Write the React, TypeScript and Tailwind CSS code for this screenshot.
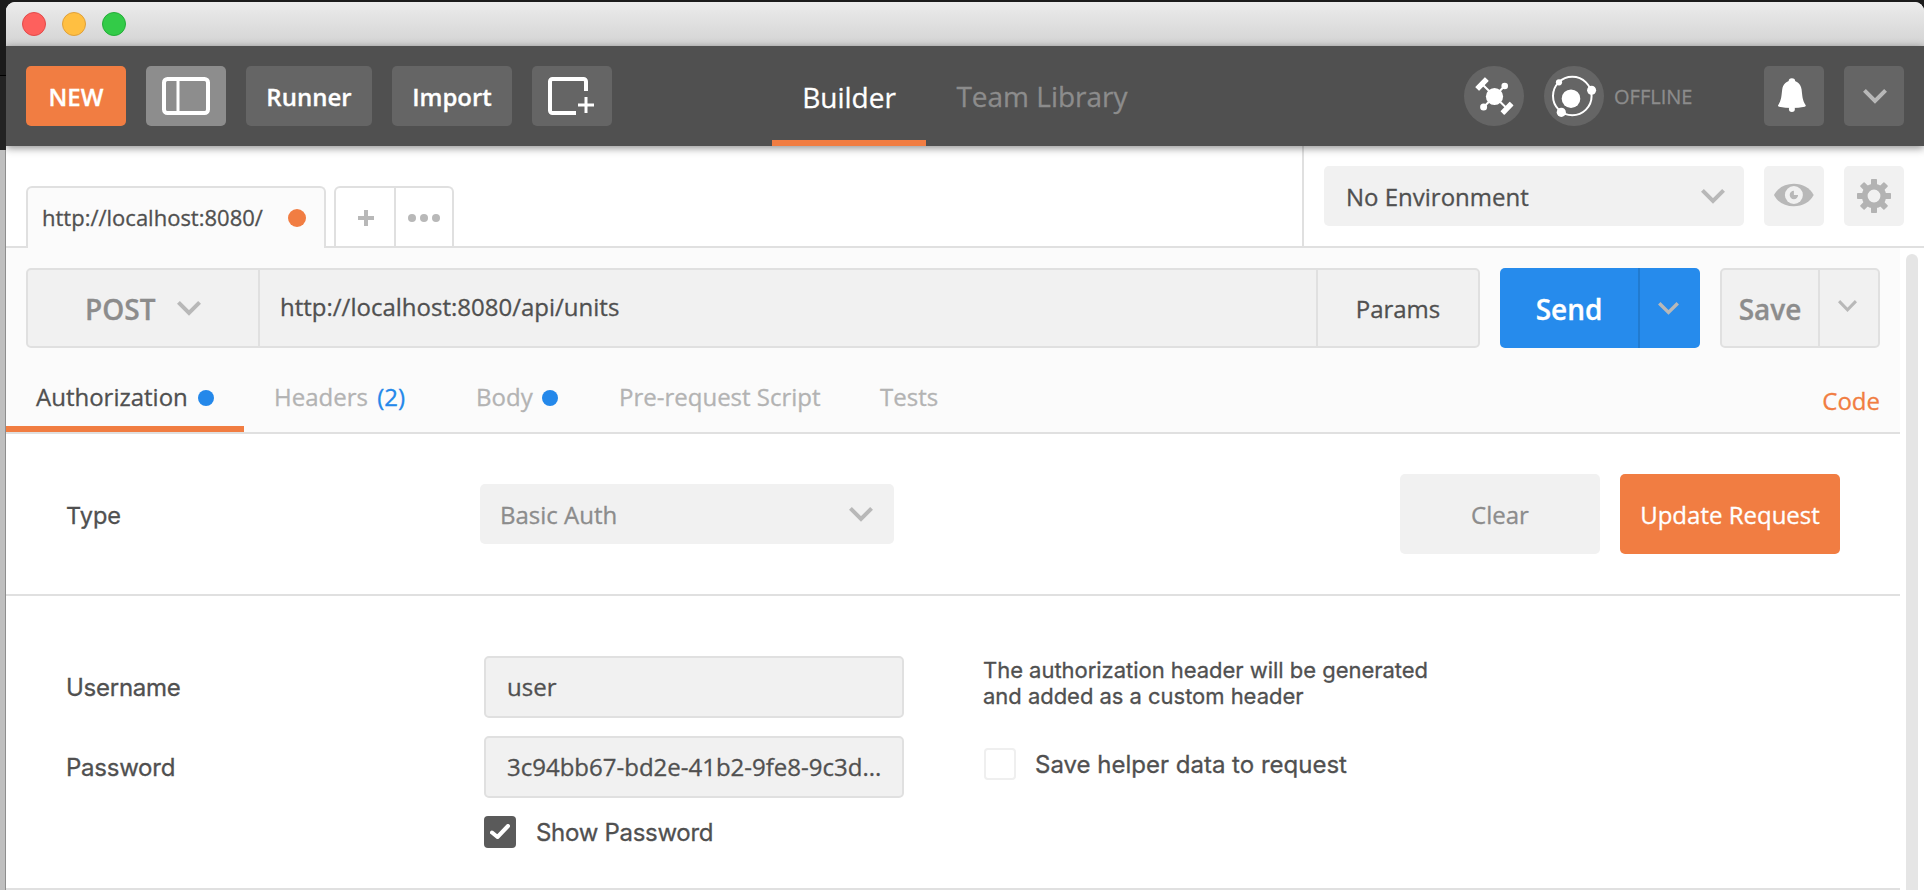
import type { ReactNode } from "react";

type ChevronProps = { width?: number; stroke?: number; className?: string };

function Chevron({ width = 24, stroke = 4, className = "" }: ChevronProps) {
  const height = Math.round(width * 0.62);
  const inset = stroke * 0.36;
  return (
    <svg width={width} height={height} viewBox={`0 0 ${width} ${height}`} className={className} fill="none">
      <path
        d={`M${inset} ${inset} L${width / 2} ${height - stroke * 0.75} L${width - inset} ${inset}`}
        stroke="currentColor"
        strokeWidth={stroke}
      />
    </svg>
  );
}

function SidebarIcon() {
  return (
    <svg width="48" height="38" viewBox="0 0 48 38" fill="none">
      <rect x="2" y="2" width="44" height="34" rx="3.5" stroke="#fff" strokeWidth="4" />
      <path d="M16 3V35" stroke="#fff" strokeWidth="3" />
    </svg>
  );
}

function NewWindowIcon() {
  return (
    <svg width="48" height="38" viewBox="0 0 48 38" fill="none" stroke="#fff">
      <path d="M38 14V4.5A2.5 2.5 0 0 0 35.5 2H4.5A2.5 2.5 0 0 0 2 4.5V33.5A2.5 2.5 0 0 0 4.5 36H28" strokeWidth="4" />
      <path d="M30 28H46M38 20V36" strokeWidth="3" />
    </svg>
  );
}

function InterceptorIcon() {
  return (
    <svg width="60" height="60" viewBox="0 0 60 60" fill="#fff">
      <path d="M18 18L43 42.5M40.7 20L19.7 41" stroke="#fff" strokeWidth="2" />
      <circle cx="30.5" cy="30.5" r="8.6" />
      <circle cx="40.7" cy="20" r="3.3" />
      <circle cx="19.6" cy="41" r="3.5" />
      <rect x="11" y="15.3" width="14" height="5.4" rx="0.5" transform="rotate(-46 18 18)" />
      <rect x="36.3" y="39.6" width="13.4" height="5.4" rx="0.5" transform="rotate(-46 43 42.3)" />
    </svg>
  );
}

function SyncIcon() {
  return (
    <svg width="60" height="60" viewBox="0 0 60 60" fill="#fff">
      <circle cx="28.3" cy="30" r="19.3" fill="none" stroke="#fff" strokeWidth="2" />
      <circle cx="27" cy="32.7" r="9.3" />
      <circle cx="15" cy="16.3" r="3.1" />
      <circle cx="47.6" cy="24.3" r="4.5" />
      <circle cx="17.3" cy="46.3" r="4.6" />
    </svg>
  );
}

function BellIcon() {
  return (
    <svg width="60" height="60" viewBox="0 0 60 60" fill="#fff">
      <circle cx="27.9" cy="15.5" r="3.3" />
      <circle cx="27.9" cy="43" r="3" />
      <path d="M27.9 14.5C33 14.5 36.8 18 37.6 23.5C38.4 29.5 38.2 34 41.7 39.3C42 40 41.5 40.5 40.8 40.7Q28 43.5 15 40.7C14.3 40.5 13.8 40 14.1 39.3C17.6 34 17.4 29.5 18.2 23.5C19 18 22.8 14.5 27.9 14.5Z" />
    </svg>
  );
}

function EyeIcon() {
  return (
    <svg width="60" height="60" viewBox="0 0 60 60" fill="#b8b8b8">
      <path d="M10 29C13.5 22 21 17.8 29.8 17.8S46 22 49.7 29C46 36.2 38.6 40.2 29.8 40.2S13.500 36.200 10 29Z" />
      <circle cx="29.9" cy="29" r="9" fill="#f1f1f1" />
      <path d="M29.9 24.8V29H34.1A4.2 4.2 0 1 1 29.9 24.8Z" />
    </svg>
  );
}

function GearIcon() {
  const teeth = [0, 45, 90, 135, 180, 225, 270, 315];
  return (
    <svg width="60" height="60" viewBox="0 0 60 60" fill="#b3b3b3">
      {teeth.map((angle) => (
        <rect key={angle} x="27" y="13" width="6" height="8" rx="0.8" transform={`rotate(${angle} 30 30)`} />
      ))}
      <circle cx="30" cy="30" r="9.3" fill="none" stroke="#b3b3b3" strokeWidth="5.8" />
    </svg>
  );
}

function ToolButton({ className, children }: { className: string; children: ReactNode }) {
  return (
    <button className={`flex h-[60px] items-center justify-center rounded-[5px] text-[24px] font-[650] text-white ${className}`}>
      {children}
    </button>
  );
}

function TitleBar() {
  return (
    <div className="flex h-[44px] items-center gap-4 bg-linear-to-b from-[#ececec] to-[#d3d3d3] pl-4">
      <span className="size-6 rounded-full border border-[#e24a4a] bg-[#fe605d]" />
      <span className="size-6 rounded-full border border-[#dfa03a] bg-[#ffbf41]" />
      <span className="size-6 rounded-full border border-[#24ad38] bg-[#33cb48]" />
    </div>
  );
}

function Header() {
  return (
    <header className="relative z-10 flex h-[100px] items-center bg-[#505050] pl-5 pr-5 shadow-[0_2px_8px_rgba(0,0,0,0.45)]">
      <div className="flex w-[746px] gap-5">
        <ToolButton className="w-[100px] bg-[#f17d42] pt-0.5">NEW</ToolButton>
        <ToolButton className="w-[80px] bg-[#8d8d8d]"><SidebarIcon /></ToolButton>
        <ToolButton className="w-[126px] bg-[#656565] pt-0.5">Runner</ToolButton>
        <ToolButton className="w-[120px] bg-[#656565] pt-0.5">Import</ToolButton>
        <ToolButton className="w-[80px] bg-[#656565]"><NewWindowIcon /></ToolButton>
      </div>
      <nav className="flex h-full text-[28px]">
        <div className="flex w-[154px] items-center justify-center border-b-[6px] border-[#f17d42] pt-[7px] text-white">Builder</div>
        <div className="flex w-[232px] items-center justify-center text-[#8c8c8c]">Team Library</div>
      </nav>
      <div className="ml-auto flex items-center">
        <span className="mr-5 size-[60px] rounded-full bg-[#656565]"><InterceptorIcon /></span>
        <span className="size-[60px] rounded-full bg-[#656565]"><SyncIcon /></span>
        <span className="ml-[10px] w-[150px] pt-0.5 text-[20px] text-[#8c8c8c]">OFFLINE</span>
        <button className="mr-5 size-[60px] rounded-[5px] bg-[#656565]"><BellIcon /></button>
        <button className="flex size-[60px] items-center justify-center rounded-[5px] bg-[#656565] pl-0.5 text-[#b8b8b8]"><Chevron /></button>
      </div>
    </header>
  );
}

function TabStrip() {
  return (
    <div className="flex h-[102px] border-b-2 border-[#e0e0e0] bg-white">
      <div className="flex flex-1 items-end gap-2 pl-5">
        <div className="-mb-0.5 flex h-[62px] w-[300px] items-center justify-between rounded-t-[6px] border-2 border-b-0 border-[#e0e0e0] bg-[#fbfbfb] pr-[18px] pb-px pl-[14px] text-[22px]">
          <span>http://localhost:8080/</span>
          <span className="size-[18px] rounded-full bg-[#f17d42]" />
        </div>
        <div className="flex h-[60px] w-[120px] rounded-t-[6px] border-2 border-b-0 border-[#e0e0e0] text-[#b8b8b8]">
          <div className="flex w-[60px] items-center justify-center border-r-2 border-[#e0e0e0] pt-0.5 pl-0.5">
            <svg width="16" height="16" viewBox="0 0 16 16" stroke="currentColor" strokeWidth="4">
              <path d="M0 8H16M8 0V16" />
            </svg>
          </div>
          <div className="flex flex-1 items-center justify-center gap-1 pt-0.5">
            <span className="size-2 rounded-full bg-[#b8b8b8]" />
            <span className="size-2 rounded-full bg-[#b8b8b8]" />
            <span className="size-2 rounded-full bg-[#b8b8b8]" />
          </div>
        </div>
      </div>
      <div className="flex w-[622px] gap-5 border-l-2 border-[#e0e0e0] pt-5 pl-5">
        <div className="flex h-[60px] w-[420px] items-center justify-between rounded-[5px] bg-[#f1f1f1] pr-[19px] pl-[22px] text-[24px]">
          <span className="pt-0.5">No Environment</span>
          <Chevron className="text-[#b8b8b8]" />
        </div>
        <button className="size-[60px] rounded-[5px] bg-[#f1f1f1]"><EyeIcon /></button>
        <button className="size-[60px] rounded-[5px] bg-[#f1f1f1]"><GearIcon /></button>
      </div>
    </div>
  );
}

function RequestBar() {
  return (
    <div className="flex h-[80px] gap-5 px-5">
      <div className="flex w-[1454px] rounded-[5px] border-2 border-[#e0e0e0] bg-[#f1f1f1] text-[24px]">
        <div className="flex w-[232px] items-center border-r-2 border-[#e0e0e0] pl-[57px] text-[28px] font-semibold text-[#8c8c8c]">
          <span className="pt-0.5">POST</span>
          <Chevron className="ml-[22px] text-[#b8b8b8]" />
        </div>
        <div className="flex flex-1 items-center pb-0.5 pl-5">http://localhost:8080/api/units</div>
        <div className="flex w-[162px] items-center justify-center border-l-2 border-[#e0e0e0] pt-0.5">Params</div>
      </div>
      <div className="flex w-[200px] rounded-[5px] bg-[#268bec] text-[28px] font-semibold text-white">
        <div className="flex w-[140px] items-center justify-center border-r-2 border-[#217bd0] pt-0.5">Send</div>
        <div className="flex flex-1 items-center justify-center pr-1 text-[#b8b8b8]"><Chevron width={21} stroke={3.5} /></div>
      </div>
      <div className="flex w-[160px] rounded-[5px] border-2 border-[#e0e0e0] bg-[#f1f1f1] text-[28px] font-semibold text-[#8c8c8c]">
        <div className="flex w-[98px] items-center justify-center border-r-2 border-[#e0e0e0] pt-0.5">Save</div>
        <div className="flex flex-1 items-center justify-center pr-1 pb-1 text-[#b8b8b8]"><Chevron width={19} stroke={3} /></div>
      </div>
    </div>
  );
}

function RequestTabs() {
  return (
    <div className="flex h-[86px] border-b-2 border-[#e0e0e0] text-[24px] text-[#b3b3b3]">
      <div className="flex w-[238px] items-center gap-[10px] border-b-[6px] border-[#f17d42] pt-[19px] pl-[30px] text-[#505050]">
        Authorization<span className="mt-[3px] size-4 rounded-full bg-[#2488ea]" />
      </div>
      <div className="flex flex-1 items-center pt-[13px] pl-[30px]">
        <div className="w-[202px]">Headers <span className="ml-[3px] text-[#2488ea]">(2)</span></div>
        <div className="flex w-[143px] items-center gap-[9px]">Body<span className="mt-[3px] size-4 rounded-full bg-[#2488ea]" /></div>
        <div className="w-[261px]">Pre-request Script</div>
        <div>Tests</div>
        <div className="ml-auto pt-2 pr-5 text-[#f17d42]">Code</div>
      </div>
    </div>
  );
}

function TypeSection() {
  return (
    <div className="flex h-[162px] items-center border-b-2 border-[#e0e0e0] pr-[60px] pl-[60px] text-[24px]">
      <label className="w-[414px] pt-1 font-['Inter',sans-serif] text-[23.5px]">Type</label>
      <div className="flex h-[60px] w-[414px] items-center justify-between rounded-[5px] bg-[#f1f1f1] pr-[21px] pl-[20px] text-[#8c8c8c]">
        <span className="pt-0.5">Basic Auth</span>
        <Chevron className="text-[#b8b8b8]" />
      </div>
      <button className="mr-5 ml-auto h-[80px] w-[200px] rounded-[5px] bg-[#f1f1f1] pt-0.5 text-[#8c8c8c]">Clear</button>
      <button className="h-[80px] w-[220px] rounded-[5px] bg-[#f17d42] pt-0.5 font-medium text-white">Update Request</button>
    </div>
  );
}

function CredentialsSection() {
  return (
    <div className="flex h-[294px] border-b-2 border-[#e0e0e0] pt-[60px] pl-[60px] font-['Inter',sans-serif] text-[24px]">
      <div className="flex w-[418px] flex-col gap-[18px] tracking-[-0.25px]">
        <label className="flex h-[62px] items-center pt-0.5">Username</label>
        <label className="flex h-[62px] items-center pt-0.5">Password</label>
      </div>
      <div className="flex w-[420px] flex-col gap-[18px]">
        <div className="flex h-[62px] items-center rounded-[5px] border-2 border-[#e0e0e0] bg-[#f1f1f1] pl-[21px] font-['Open_Sans',sans-serif]">user</div>
        <div className="flex h-[62px] items-center rounded-[5px] border-2 border-[#e0e0e0] bg-[#f1f1f1] pl-[21px] font-['Open_Sans',sans-serif]">3c94bb67-bd2e-41b2-9fe8-9c3d...</div>
        <div className="flex h-8 items-center gap-5">
          <span className="flex size-8 items-center justify-center rounded-[4px] bg-[#5a5a5a]">
            <svg width="20" height="16" viewBox="0 0 20 16" fill="none" stroke="#fff" strokeWidth="4" strokeLinecap="round" strokeLinejoin="round">
              <path d="M2 8.5L7.5 13L18 2" />
            </svg>
          </span>
          <span className="pt-0.5 tracking-[-0.3px]">Show Password</span>
        </div>
      </div>
      <div className="pt-px pl-20">
        <p className="-ml-px text-[22px] leading-[26px] tracking-[-0.03px]">The authorization header will be generated<br />and added as a custom header</p>
        <div className="mt-[39px] flex h-8 items-center gap-[19px]">
          <span className="size-8 rounded-[4px] border-2 border-[#efefef] bg-white" />
          <span className="pt-0.5">Save helper data to request</span>
        </div>
      </div>
    </div>
  );
}

export default function App() {
  return (
    <div className="flex h-[890px] w-[1924px] overflow-hidden bg-[#1b1b1b] pt-0.5 font-['Open_Sans',sans-serif] text-[#505050] [-webkit-text-stroke:0.3px]">
      <div className="flex w-[6px] shrink-0 flex-col">
        <div className="h-[73px] bg-[#1b1b1b]" />
        <div className="h-[75px] border-t border-black bg-[#232323]" />
        <div className="flex-1 border-r border-[#8e8e8e] bg-[#bfbfbf]" />
      </div>
      <div className="flex flex-1 flex-col overflow-hidden rounded-t-[9px] bg-white">
        <TitleBar />
        <Header />
        <TabStrip />
        <div className="flex flex-1">
          <main className="w-[1894px]">
            <div className="bg-[#fbfbfb] pt-5">
              <RequestBar />
              <RequestTabs />
            </div>
            <TypeSection />
            <CredentialsSection />
          </main>
          <div className="flex-1 pt-[6px] pl-[6px]">
            <div className="h-full w-3 rounded-t-full bg-[#e5e5e5]" />
          </div>
        </div>
      </div>
    </div>
  );
}
